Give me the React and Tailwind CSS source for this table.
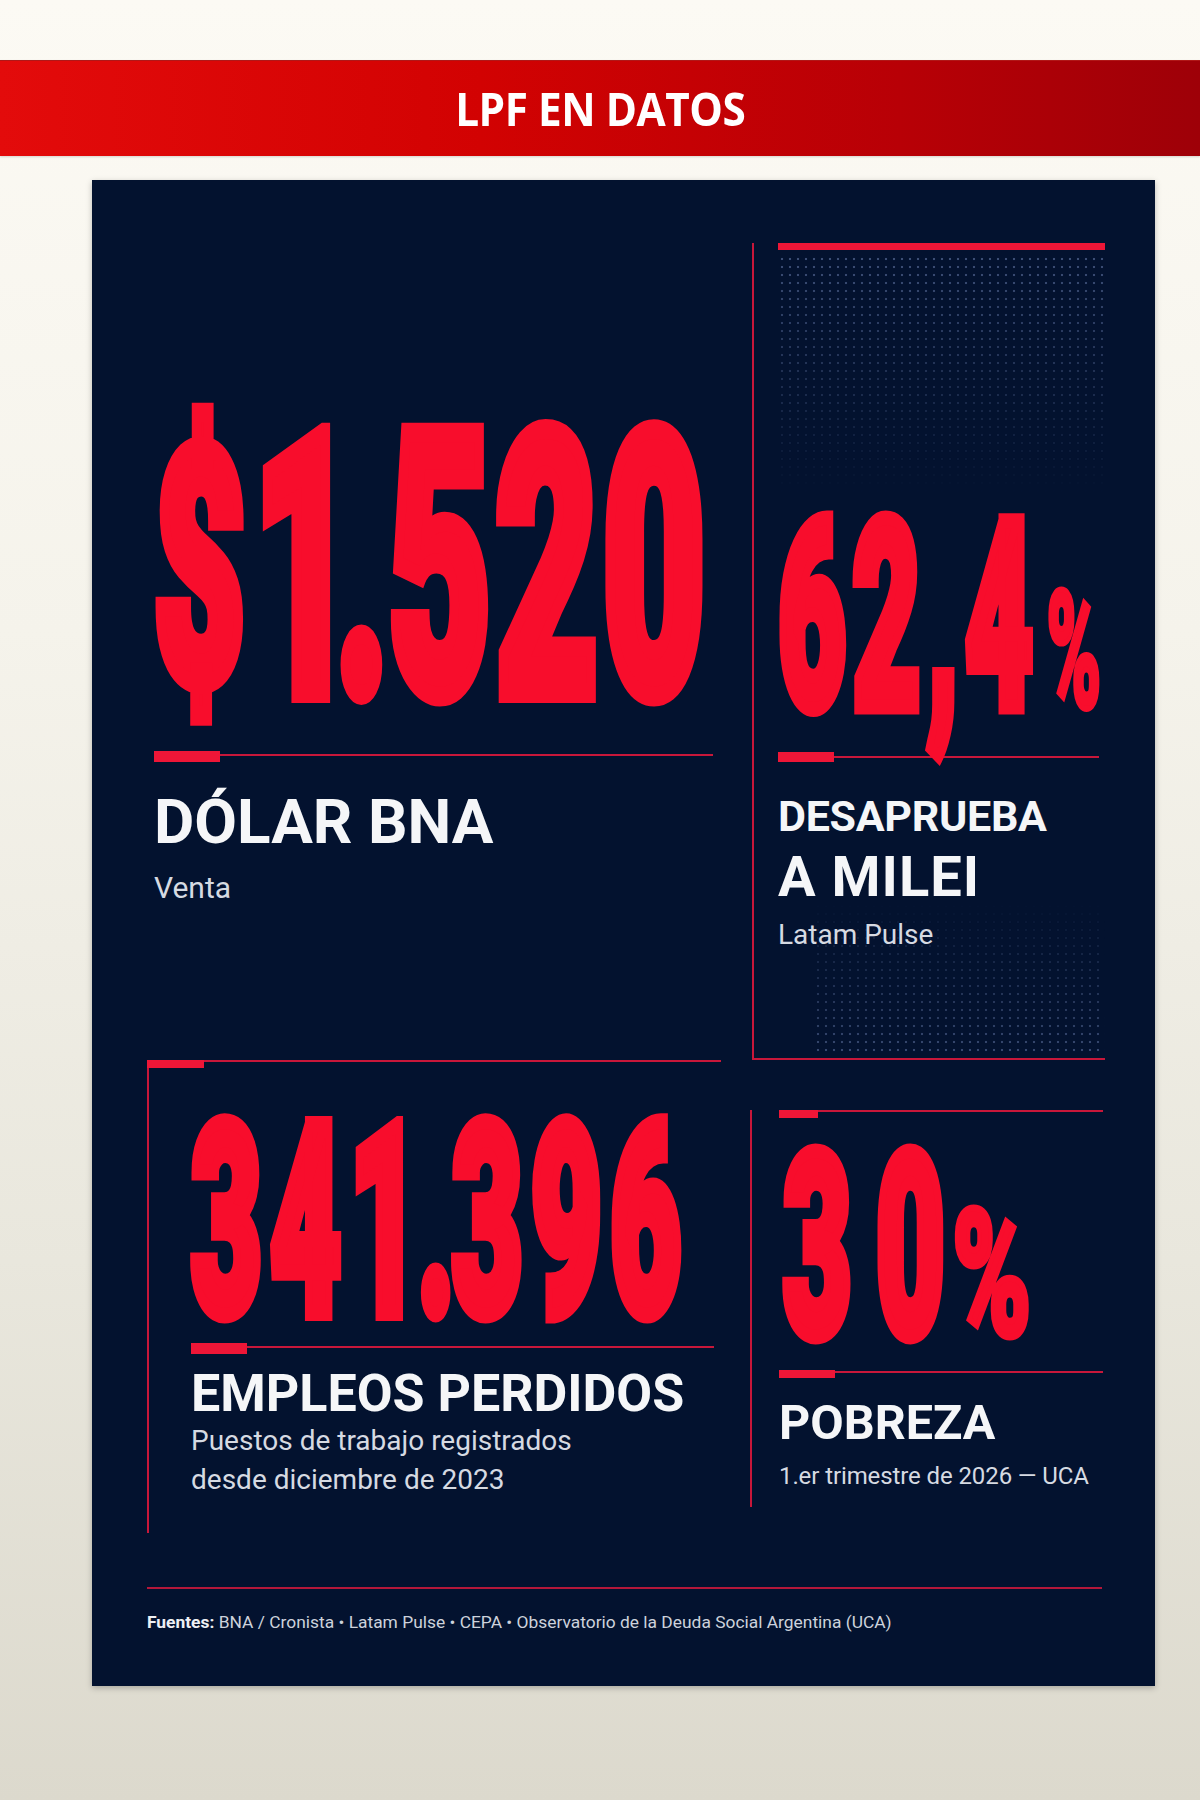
import React from "react";

const RED = "text-[#f80d2c]";

function Rule({ outer, thick, thin }) {
  return (
    <div className={"flex items-start " + outer}>
      <div className={"shrink-0 bg-[#ee1637] " + thick} />
      <div className={"flex-1 bg-[#c8173a] " + thin} />
    </div>
  );
}

function Big({ wrap, inner, children }) {
  return (
    <div className={wrap}>
      <div
        className={
          "whitespace-nowrap leading-none font-black font-['Roboto','Liberation_Sans',sans-serif] origin-top-left " +
          RED +
          " " +
          inner
        }
      >
        {children}
      </div>
    </div>
  );
}

export default function App() {
  return (
    <div className="min-h-[1800px] w-full pt-[60px] bg-[linear-gradient(180deg,#fcfaf4_0%,#f5f3eb_35%,#e9e7dd_70%,#dcd9cd_100%)] font-['Roboto','Liberation_Sans',sans-serif]">
      {/* Header bar */}
      <div className="h-[96px] w-full flex items-center justify-center bg-[linear-gradient(90deg,#e30b0b_0%,#d20202_40%,#b80006_75%,#9e0008_100%)] border-t border-[#b01818] shadow-[0_1px_2px_rgba(0,0,0,0.15)]">
        <span className="inline-block scale-x-[0.9] text-white text-[47px] leading-none font-bold tracking-[-0.5px] font-['Open_Sans','Noto_Sans',sans-serif]">
          LPF EN DATOS
        </span>
      </div>

      {/* Card */}
      <div className="mt-[24px] ml-[92px] w-[1063px] h-[1506px] bg-[#03122f] overflow-hidden pl-[55px] pr-[50px] pt-[63px] shadow-[0_2px_6px_rgba(0,0,0,0.25)]">
        {/* Row 1 */}
        <div className="flex h-[817px]">
          {/* Top-left */}
          <div className="w-[605px] shrink-0 pl-[7px] flex flex-col">
            <Big
              wrap="h-[290px] mt-[175px]"
              inner="text-[366px] tracking-[10px] scale-x-[0.482] -mt-[33px] [-webkit-text-stroke:20px_#f80d2c]"
            >
              <span className="text-[326px] tracking-[17px] align-[12px]">$</span>
              <span className="tracking-[-42px]">1</span>
              <span className="tracking-[0px]">.</span>520
            </Big>
            <Rule
              outer="mt-[43px] w-[559px]"
              thick="h-[11px] w-[66px]"
              thin="h-[2px] mt-[3px]"
            />
            <div className="mt-[29px] text-[62px] leading-none font-bold text-[#f5f6f8]">
              DÓLAR BNA
            </div>
            <div className="mt-[20px] text-[30px] leading-none text-[#d6dae2]">
              Venta
            </div>
          </div>

          {/* Top-right */}
          <div className="relative isolate w-[353px] shrink-0 border-l-2 border-b-2 border-[#c8173a] pl-[24px] flex flex-col">
            <div className="pointer-events-none absolute -z-10 left-[24px] right-0 top-[12px] h-[240px] bg-[radial-gradient(circle,rgba(120,140,190,0.5)_1px,transparent_1.6px)] bg-[length:8px_8px] [mask-image:linear-gradient(to_bottom,black,transparent)]" />
            <div className="pointer-events-none absolute -z-10 left-[60px] right-0 bottom-[6px] h-[150px] bg-[radial-gradient(circle,rgba(120,140,190,0.45)_1px,transparent_1.6px)] bg-[length:8px_8px] [mask-image:linear-gradient(to_top,black,transparent)]" />
            <div className="h-[7px] w-full bg-[#ee1637]" />
            <Big
              wrap="h-[204px] mt-[263px]"
              inner="text-[262px] tracking-[14px] scale-x-[0.449] -mt-[26px] [-webkit-text-stroke:15px_#f80d2c]"
            >
              62,4
              <span className="text-[164px] tracking-normal [-webkit-text-stroke:6px_#f80d2c] ml-[16px]">
                %
              </span>
            </Big>
            <Rule
              outer="mt-[35px] w-[321px]"
              thick="h-[10px] w-[56px]"
              thin="h-[2px] mt-[4px]"
            />
            <div className="mt-[33px] text-[43px] leading-none font-bold tracking-[-0.3px] text-[#f5f6f8]">
              DESAPRUEBA
            </div>
            <div className="mt-[11px] text-[56px] leading-none font-bold tracking-[1px] text-[#f5f6f8]">
              A MILEI
            </div>
            <div className="mt-[16px] text-[28px] leading-none text-[#d6dae2]">
              Latam Pulse
            </div>
          </div>
        </div>

        {/* Row 2 */}
        <div className="flex items-start">
          {/* Bottom-left */}
          <div className="relative w-[574px] h-[473px] shrink-0 border-l-2 border-t-2 border-[#c8173a] pl-[42px] flex flex-col">
            <div className="absolute -top-[2px] -left-[2px] w-[57px] h-[8px] bg-[#ee1637]" />
            <Big
              wrap="h-[207px] mt-[53px]"
              inner="text-[266px] tracking-[18px] scale-x-[0.46] -mt-[26px] [-webkit-text-stroke:16px_#f80d2c]"
            >
              34<span className="tracking-[-6px]">1.</span>396
            </Big>
            <Rule
              outer="mt-[21px] w-[523px]"
              thick="h-[11px] w-[56px]"
              thin="h-[2px] mt-[3px]"
            />
            <div className="mt-[14px] text-[52px] leading-none font-bold text-[#f5f6f8]">
              EMPLEOS PERDIDOS
            </div>
            <div className="mt-[1px] text-[28px] leading-[39px] text-[#d6dae2]">
              Puestos de trabajo registrados
              <br />
              desde diciembre de 2023
            </div>
          </div>

          {/* Bottom-right */}
          <div className="ml-[29px] mt-[50px] w-[355px] h-[397px] shrink-0 border-l-2 border-[#c8173a] pl-[27px] flex flex-col">
            <Rule
              outer="w-[324px]"
              thick="h-[8px] w-[39px]"
              thin="h-[2px] mt-0"
            />
            <Big
              wrap="h-[198px] mt-[27px] ml-[4px]"
              inner="text-[255px] tracking-[52px] scale-x-[0.465] -mt-[25px] [-webkit-text-stroke:15px_#f80d2c]"
            >
              30
              <span className="inline-block origin-left scale-x-[1.3] text-[176px] tracking-normal [-webkit-text-stroke:7px_#f80d2c] -ml-[36px]">
                %
              </span>
            </Big>
            <Rule
              outer="mt-[27px] w-[324px]"
              thick="h-[8px] w-[56px]"
              thin="h-[2px] mt-[1px]"
            />
            <div className="mt-[21px] text-[48.5px] leading-none font-bold text-[#f5f6f8]">
              POBREZA
            </div>
            <div className="mt-[16px] text-[24px] leading-none tracking-[-0.1px] text-[#d6dae2]">
              1.er trimestre de 2026 — UCA
            </div>
          </div>
        </div>

        {/* Footer */}
        <div className="mt-[54px] w-[955px] h-[2px] bg-[#b3173a]" />
        <div className="mt-[25px] text-[17.4px] leading-none text-[#cdd2dc]">
          <span className="font-bold text-[#eef0f4]">Fuentes:</span> BNA / Cronista • Latam Pulse • CEPA • Observatorio de la Deuda Social Argentina (UCA)
        </div>
      </div>
    </div>
  );
}
